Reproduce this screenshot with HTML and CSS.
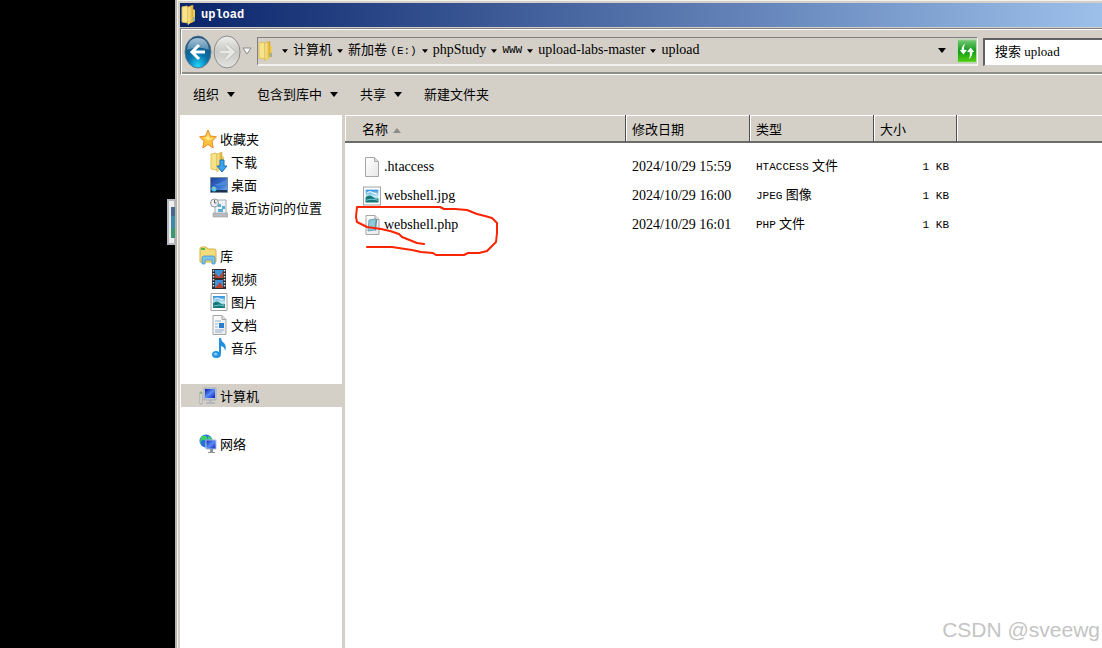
FILE: index.html
```html
<!DOCTYPE html>
<html lang="zh-CN">
<head>
  <meta charset="UTF-8">
  <meta name="viewport" content="width=device-width, initial-scale=1.0">
  <title>upload</title>
  <link rel="stylesheet" href="styles.css">
</head>
<body>
  <!-- shared icons -->
  <svg class="defs" width="0" height="0" aria-hidden="true">
    <defs>
      <linearGradient id="gold" x1="0" x2="1"><stop offset="0" stop-color="#fff0a0"/><stop offset="1" stop-color="#d9a82c"/></linearGradient>
      <linearGradient id="sky" x1="0" y1="0" x2="0" y2="1"><stop offset="0" stop-color="#2f8fe0"/><stop offset="0.55" stop-color="#c8f0f8"/><stop offset="1" stop-color="#16708a"/></linearGradient>
      <linearGradient id="screen" x1="0" y1="0" x2="1" y2="1"><stop offset="0" stop-color="#0818b0"/><stop offset="0.5" stop-color="#5a8cf8"/><stop offset="1" stop-color="#0a1cc0"/></linearGradient>
      <linearGradient id="desk" x1="0" y1="0" x2="1" y2="1"><stop offset="0" stop-color="#1c3f94"/><stop offset="0.6" stop-color="#3a74d4"/><stop offset="1" stop-color="#78b8f0"/></linearGradient>
      <linearGradient id="paper" x1="0" y1="0" x2="1" y2="1"><stop offset="0" stop-color="#ffffff"/><stop offset="1" stop-color="#e8e8e8"/></linearGradient>
      <radialGradient id="ball" cx="0.5" cy="0.95" r="0.8"><stop offset="0" stop-color="#20d8ff"/><stop offset="0.5" stop-color="#0b74ac"/><stop offset="1" stop-color="#174f7c"/></radialGradient>
      <linearGradient id="shine" x1="0" y1="0" x2="0" y2="1"><stop offset="0" stop-color="#e8f4fa"/><stop offset="1" stop-color="#6ca0c0"/></linearGradient>
      <linearGradient id="silver" x1="0" y1="0" x2="0" y2="1"><stop offset="0" stop-color="#eeeeec"/><stop offset="0.5" stop-color="#c8c8c4"/><stop offset="1" stop-color="#e4e4e0"/></linearGradient>
      <linearGradient id="green" x1="0" y1="0" x2="0" y2="1"><stop offset="0" stop-color="#70c870"/><stop offset="0.5" stop-color="#139a1c"/><stop offset="1" stop-color="#50d010"/></linearGradient>
    </defs>
    <symbol id="folder" viewBox="0 0 16 20">
      <path d="M1 2l5-1 1 2v15l-6-1z" fill="#f8e488" stroke="#dfc060"/>
      <path d="M7 2l5-2v15l-5 5z" fill="url(#gold)" stroke="#d4ac44" stroke-width=".6"/>
      <path d="M12 4l2 1v11l-4 2-3 1 5-4z" fill="#eccb58"/>
      <path d="M13 12v4" stroke="#3c9cd8"/>
    </symbol>
    <symbol id="picture" viewBox="0 0 17 18">
      <path d="M.5 .5h16v17H.5z" fill="#fff" stroke="#a4a4a4"/>
      <path d="M2.500 3h12v12h-12z" fill="url(#sky)"/>
      <path d="M2.500 10q4-3 7 0t5 1v4h-12z" fill="#187878"/>
      <path d="M4 6q3-2 5 0l4 1" stroke="#fff" fill="none"/>
      <path d="M3 13q6-2 11 0" stroke="#6cc8d8" fill="none"/>
    </symbol>
    <symbol id="page" viewBox="0 0 15 20">
      <path d="M1 .5h9l4 4v15H1z" fill="url(#paper)" stroke="#a6a6a6"/>
      <path d="M10 .5v4h4" fill="#ddd" stroke="#a6a6a6"/>
    </symbol>
    <symbol id="down" viewBox="0 0 8 6"><path d="M0 0h8L4 5z" fill="#000"/></symbol>
  </svg>

  <div class="desktop">
    <svg class="desktop-icon" viewBox="0 0 8 46"><path d="M1 1h7v44H1z" fill="#eee" stroke="#b8b8c4" stroke-width="2"/><path d="M4 8h4v31H4z" fill="#3c8ca8"/><path d="M4 8h4v9H4z" fill="#456a90"/><path d="M4 29h4v10H4z" fill="#389870"/></svg>
  </div>

  <div class="window">
    <header class="titlebar">
      <svg class="title-icon"><use href="#folder"/></svg>
      <h1>upload</h1>
    </header>

    <div class="addressbar">
      <div class="history">
        <button aria-label="后退">
          <svg width="28" height="34" viewBox="0 0 28 34"><ellipse cx="14" cy="17" rx="13" ry="16" fill="url(#ball)" stroke="#57788c"/><path d="M3 15Q4 3 14 3t11 12q-11-5-22 0z" fill="url(#shine)" opacity=".7"/><path d="M21 17H9m6-7l-7 7 7 7" fill="none" stroke="#fff" stroke-width="3"/></svg>
        </button>
        <button aria-label="前进">
          <svg width="28" height="34" viewBox="0 0 28 34"><ellipse cx="14" cy="17" rx="13" ry="16" fill="url(#silver)" stroke="#8c8c8c"/><path d="M7 17h12m-6-7l7 7-7 7" fill="none" stroke="#b4b4b0" stroke-width="4"/><path d="M7 17h12m-6-7l7 7-7 7" fill="none" stroke="#e8e8e6" stroke-width="3"/></svg>
        </button>
        <button aria-label="最近的页面">
          <svg width="10" height="9" viewBox="0 0 10 9"><path d="M1 1h8L5 7z" fill="#fff" stroke="#8a8a90"/></svg>
        </button>
      </div>

      <nav class="path" aria-label="路径">
        <svg class="path-icon"><use href="#folder"/></svg>
        <svg class="sep"><use href="#down"/></svg>
        <a href="#">计算机</a>
        <svg class="sep"><use href="#down"/></svg>
        <a href="#">新加卷 <span class="caps">(E:)</span></a>
        <svg class="sep"><use href="#down"/></svg>
        <a href="#" class="latin">phpStudy</a>
        <svg class="sep"><use href="#down"/></svg>
        <a href="#" class="caps">WWW</a>
        <svg class="sep"><use href="#down"/></svg>
        <a href="#" class="latin">upload-labs-master</a>
        <svg class="sep"><use href="#down"/></svg>
        <a href="#" class="latin">upload</a>
        <button class="path-more" aria-label="以前的位置"><svg class="arrow"><use href="#down"/></svg></button>
        <button class="refresh" aria-label="刷新">
          <svg width="20" height="24" viewBox="0 0 20 24"><path d="M0 0h20v24H0z" fill="url(#green)"/><path d="M8 4Q4 6 4 11H2l4 5 4-5H7q-1-4 1-7z" fill="#fff"/><path d="M12 21q4-3 4-8h2l-4-5-4 5h3q1 4-1 8z" fill="#fff"/></svg>
        </button>
      </nav>
      <input class="search" type="text" placeholder="搜索 upload" aria-label="搜索 upload">
    </div>

    <div class="toolbar">
      <button>组织 <svg class="arrow"><use href="#down"/></svg></button>
      <button>包含到库中 <svg class="arrow"><use href="#down"/></svg></button>
      <button>共享 <svg class="arrow"><use href="#down"/></svg></button>
      <button>新建文件夹</button>
    </div>

    <div class="content">
      <nav class="sidebar" aria-label="导航">
        <div class="group">
          <a href="#" class="top"><svg viewBox="0 0 18 20"><path d="M9 1l2.500 6 6 .8-4.500 4.500 1.200 6.700L9 15.500 3.800 19 5 12.300.5 7.800l6-.8z" fill="#ffc23c" stroke="#e88a24"/><path d="M9 4l1.500 5 4 .5-5.500 2-4-3 3-.5z" fill="#ffe88c"/></svg>收藏夹</a>
          <a href="#"><svg viewBox="0 0 18 20"><use href="#folder" width="16" height="20"/><path d="M10 8h4v6h3l-5 6-5-6h3z" fill="#3ca4ec" stroke="#1a70b8"/></svg>下载</a>
          <a href="#"><svg viewBox="0 0 18 20"><path d="M.5 2.500h17v15H.5z" fill="url(#desk)" stroke="#7c8ca0"/><path d="M1 15h16v2H1z" fill="#1c3050"/><path d="M4 10q6-1 13-6v5q-7 3-13 1z" fill="#4c88dc"/><circle cx="4" cy="14" r="2.500" fill="#50c8f4"/><path d="M3 12l2 2" stroke="#f8d040"/></svg>桌面</a>
          <a href="#"><svg viewBox="0 0 18 20"><path d="M5 2h11v14H5z" fill="#eef4f8" stroke="#a0a8b0"/><path d="M8 6h3v3H8zM12 8h3v3h-3zM8 11h5v3H8z" fill="#58acd8"/><circle cx="4.500" cy="5" r="4" fill="#f0f0f0" stroke="#8c9498"/><path d="M4.500 2v3h2" fill="none" stroke="#58646c"/><path d="M3 15h15v4H3z" fill="#b8bcc0" stroke="#989ca0" stroke-width=".6"/></svg>最近访问的位置</a>
        </div>
        <div class="group">
          <a href="#" class="top"><svg viewBox="0 0 18 20"><path d="M1 3q0-2 2-2h4l2 2h7q1 0 1 2v11H1z" fill="#f4dc7c" stroke="#d4b048"/><path d="M2 3h4" stroke="#58b848" stroke-width="2"/><path d="M3 18v-6q0-2 2-2h9q2 0 2 2v6h-3v-4H6v4z" fill="#78c4ec" stroke="#3c8cc0" stroke-width=".7"/></svg>库</a>
          <a href="#"><svg viewBox="0 0 18 20"><path d="M2 0h14v20H2z" fill="#2c2c30"/><path d="M5 1h8v8H5zM5 11h8v8H5z" fill="#3c94dc"/><path d="M5 4l4 4 4-6v7H5zM5 19l5-6 3 5v1z" fill="#b84430"/><path d="M3.500 1v18M14.500 1v18" stroke="#e4e4e4" stroke-width="1.500" stroke-dasharray="1.500 1.500"/></svg>视频</a>
          <a href="#"><svg viewBox="0 0 18 20"><use href="#picture" x="0" y="1" width="18" height="18"/></svg>图片</a>
          <a href="#"><svg viewBox="0 0 18 20"><use href="#page" x="2" width="15" height="20"/><path d="M5 6h6M5 9h3M5 12h3M5 15h9M5 17h7" stroke="#8cb0d0"/><path d="M9 8h5v5H9z" fill="#287cd4"/></svg>文档</a>
          <a href="#"><svg viewBox="0 0 18 20"><path d="M9 0h2q0 3 3 5 3 3 1 8 0-4-4-5v8q0 4-4.500 4T2 16.500Q2 13 6 13q2 0 3 1z" fill="#2490e0"/><ellipse cx="5.500" cy="16" rx="2" ry="1.500" fill="#78ccf8"/></svg>音乐</a>
        </div>
        <div class="group">
          <a href="#" class="top active"><svg viewBox="0 0 18 20"><path d="M5 2h12v12H5z" fill="#c4ccd8" stroke="#8c94a4" stroke-width=".6"/><path d="M6 3h10v9H6z" fill="url(#screen)"/><path d="M10 14h3v2h3v2H7v-2h3z" fill="#b4b8bc"/><path d="M1 6h2v12H1z" fill="#eee" stroke="#888" stroke-width=".6"/><path d="M1 7h2" stroke="#30b030"/></svg>计算机</a>
        </div>
        <div class="group">
          <a href="#" class="top"><svg viewBox="0 0 18 20"><circle cx="7" cy="7" r="6.500" fill="#2870dc"/><path d="M2 3q4-3 6 0t-3 3-2 5Q0 8 2 3zM9 2q4 1 4 4l-4-1zM6 9l3 2-2 3z" fill="#3cd068"/><path d="M7 6h10v9H7z" fill="url(#screen)" stroke="#b4c0d8"/><path d="M11 15h3v3h2v1H9v-1h2z" fill="#8c949c"/></svg>网络</a>
        </div>
      </nav>

      <main class="files">
        <table>
          <colgroup><col class="c-name"><col class="c-date"><col class="c-type"><col class="c-size"><col></colgroup>
          <thead>
            <tr><th>名称 <svg class="sort" viewBox="0 0 8 5"><path d="M4 0l4 5H0z" fill="#8c8c88"/></svg></th><th>修改日期</th><th>类型</th><th>大小</th><td></td></tr>
          </thead>
          <tbody>
            <tr>
              <td><a href="#" class="latin"><svg><use href="#page"/></svg>.htaccess</a></td>
              <td class="latin">2024/10/29 15:59</td>
              <td><span class="caps">HTACCESS</span> 文件</td>
              <td class="caps">1 KB</td>
              <td></td>
            </tr>
            <tr>
              <td><a href="#" class="latin"><svg><use href="#picture"/></svg>webshell.jpg</a></td>
              <td class="latin">2024/10/29 16:00</td>
              <td><span class="caps">JPEG</span> 图像</td>
              <td class="caps">1 KB</td>
              <td></td>
            </tr>
            <tr>
              <td><a href="#" class="latin"><svg viewBox="0 0 18 20"><use href="#page" x="2" width="15" height="20"/><path d="M6 5l7-1-1 11-7 1z" fill="#90c8d8" stroke="#6ca4b8"/><path d="M13 4l1 1-1 11-1-1z" fill="#4c8498"/></svg>webshell.php</a></td>
              <td class="latin">2024/10/29 16:01</td>
              <td><span class="caps">PHP</span> 文件</td>
              <td class="caps">1 KB</td>
              <td></td>
            </tr>
          </tbody>
        </table>
        <!-- hand-drawn mark round webshell.php -->
        <svg class="mark" viewBox="0 0 160 60" aria-hidden="true"><path d="M79 44L72 43 57 37 54 34 45 31 36 29 22 27 12 22 11 17 12 7H95L99 9 110 9 122 10 132 14 140 16 147 18 152 23V33L151 42 142 51 134 53 123 53 119 55H91L88 53 76 52 67 50 47 47H22" fill="none" stroke="#fb2400" stroke-width="2" stroke-linejoin="round" stroke-linecap="round"/></svg>
      </main>
    </div>
  </div>
  <div class="watermark">CSDN @sveewg</div>
</body>
</html>
```

FILE: styles.css
```css
* {
  box-sizing: border-box;
}
body {
  margin: 0;
  height: 100vh;
  display: flex;
  position: relative;
  overflow: hidden;
  background: #000;
  color: #000;
  font-family: "Liberation Serif", "Noto Sans CJK SC", serif;
  font-size: 13px;
}
a {
  color: inherit;
  text-decoration: none;
}
button {
  padding: 0;
  border: none;
  background: none;
  color: inherit;
  font: inherit;
}
svg {
  display: block;
  flex: none;
}
.defs {
  position: absolute;
}
.latin {
  font-size: 14px;
}
.caps {
  font-family: "Liberation Mono", monospace;
  font-size: 11px;
}
.desktop {
  flex: 0 0 175px;
  position: relative;
}
.desktop-icon {
  position: absolute;
  right: 0;
  top: 199px;
  width: 8px;
  height: 46px;
}
.window {
  flex: 1;
  min-width: 0;
  display: flex;
  flex-direction: column;
  padding: 3px 0 0 3px;
  background: #d4d0c8;
  border-left: 2px solid #b8b4ac;
  box-shadow: inset 1px 1px 0 #f4f2ee;
}
.titlebar {
  height: 24px;
  display: flex;
  align-items: center;
  gap: 4px;
  padding-left: 1px;
  background: linear-gradient(90deg, #0a246a, #9cc0ea);
}
.titlebar h1 {
  margin: 0;
  color: #fff;
  font-family: "Liberation Mono", monospace;
  font-size: 12px;
}
.title-icon,
.path-icon {
  width: 16px;
  height: 20px;
}
.addressbar {
  height: 47px;
  margin-top: 1px;
  display: flex;
  align-items: center;
  gap: 5px;
  padding-left: 3px;
  border-top: 1px solid #808080;
  border-left: 1px solid #808080;
  border-bottom: 1px solid #fff;
  box-shadow: inset 1px 1px 0 #fff, inset 0 -2px 0 #8c8c88;
}
.history {
  display: flex;
  align-items: center;
  gap: 1px;
}
.path {
  flex: 1;
  height: 29px;
  display: flex;
  align-items: center;
  gap: 5px;
  white-space: nowrap;
  border: 1px solid #808080;
  border-right-color: #fff;
  border-bottom: 2px solid #f4f2ee;
}
.path a {
  height: 20px;
  margin-bottom: 2px;
  line-height: 20px;
}
.sep {
  width: 6px;
  height: 5px;
}
.path-icon + .sep {
  margin-left: 3px;
}
.path-more {
  margin-left: auto;
  margin-right: 6px;
}
.arrow {
  width: 8px;
  height: 6px;
}
.refresh svg {
  border: 1px solid #b4dcb0;
}
.search {
  width: 119px;
  height: 28px;
  padding: 0 10px;
  border: 2px solid #606060;
  border-right: none;
  border-bottom: 1px solid #d4d0c8;
  border-radius: 0;
  background: #fff;
  font: inherit;
}
.search::placeholder {
  color: #000;
  opacity: 1;
}
.toolbar {
  height: 40px;
  display: flex;
  align-items: center;
  gap: 22px;
  padding-left: 13px;
}
.toolbar button {
  height: 20px;
  display: flex;
  align-items: center;
  gap: 8px;
  line-height: 16px;
}
.content {
  flex: 1;
  min-height: 0;
  display: flex;
}
.sidebar {
  flex: 0 0 165px;
  display: flex;
  flex-direction: column;
  gap: 25px;
  padding-top: 12px;
  background: #fff;
  border-right: 3px solid #d4d0c8;
}
.sidebar a {
  height: 23px;
  display: flex;
  align-items: center;
  gap: 3px;
  padding-left: 30px;
}
.sidebar a.top {
  padding-left: 19px;
}
.sidebar a.active {
  margin-left: 1px;
  padding-left: 18px;
  background: #d4d0c8;
}
.sidebar svg {
  width: 18px;
  height: 20px;
}
.files {
  flex: 1;
  min-width: 0;
  position: relative;
  background: #fff;
}
.files table {
  width: 100%;
  table-layout: fixed;
  border-collapse: separate;
  border-spacing: 0;
}
.c-name {
  width: 281px;
}
.c-date,
.c-type {
  width: 124px;
}
.c-size {
  width: 83px;
}
thead th,
thead td {
  height: 28px;
  padding: 3px 0 0 6px;
  text-align: left;
  font-weight: normal;
  line-height: 20px;
  background: #d4d0c8;
  border-right: 1px solid #505050;
  border-bottom: 2px solid #6c6c68;
  box-shadow: inset 1px 1px 0 #fff;
}
thead td {
  border-right: none;
}
thead th:first-child {
  padding-left: 17px;
}
.sort {
  display: inline-block;
  width: 8px;
  height: 5px;
  margin-left: 2px;
  vertical-align: middle;
}
tbody::before {
  content: "";
  display: block;
  height: 9px;
}
tbody td {
  height: 29px;
  padding: 0 0 0 6px;
  line-height: 20px;
  white-space: nowrap;
}
tbody td:first-child {
  padding-left: 18px;
}
tbody td:nth-child(4) {
  padding-right: 8px;
  text-align: right;
}
tbody td a {
  display: flex;
  align-items: center;
  gap: 3px;
}
tbody td svg {
  width: 18px;
  height: 20px;
}
.mark {
  position: absolute;
  left: 0;
  top: 85px;
  width: 160px;
  height: 60px;
}
.watermark {
  position: absolute;
  right: 2px;
  bottom: 6px;
  color: #c4c4c4;
  font-family: "Liberation Sans", sans-serif;
  font-size: 21px;
}
```
